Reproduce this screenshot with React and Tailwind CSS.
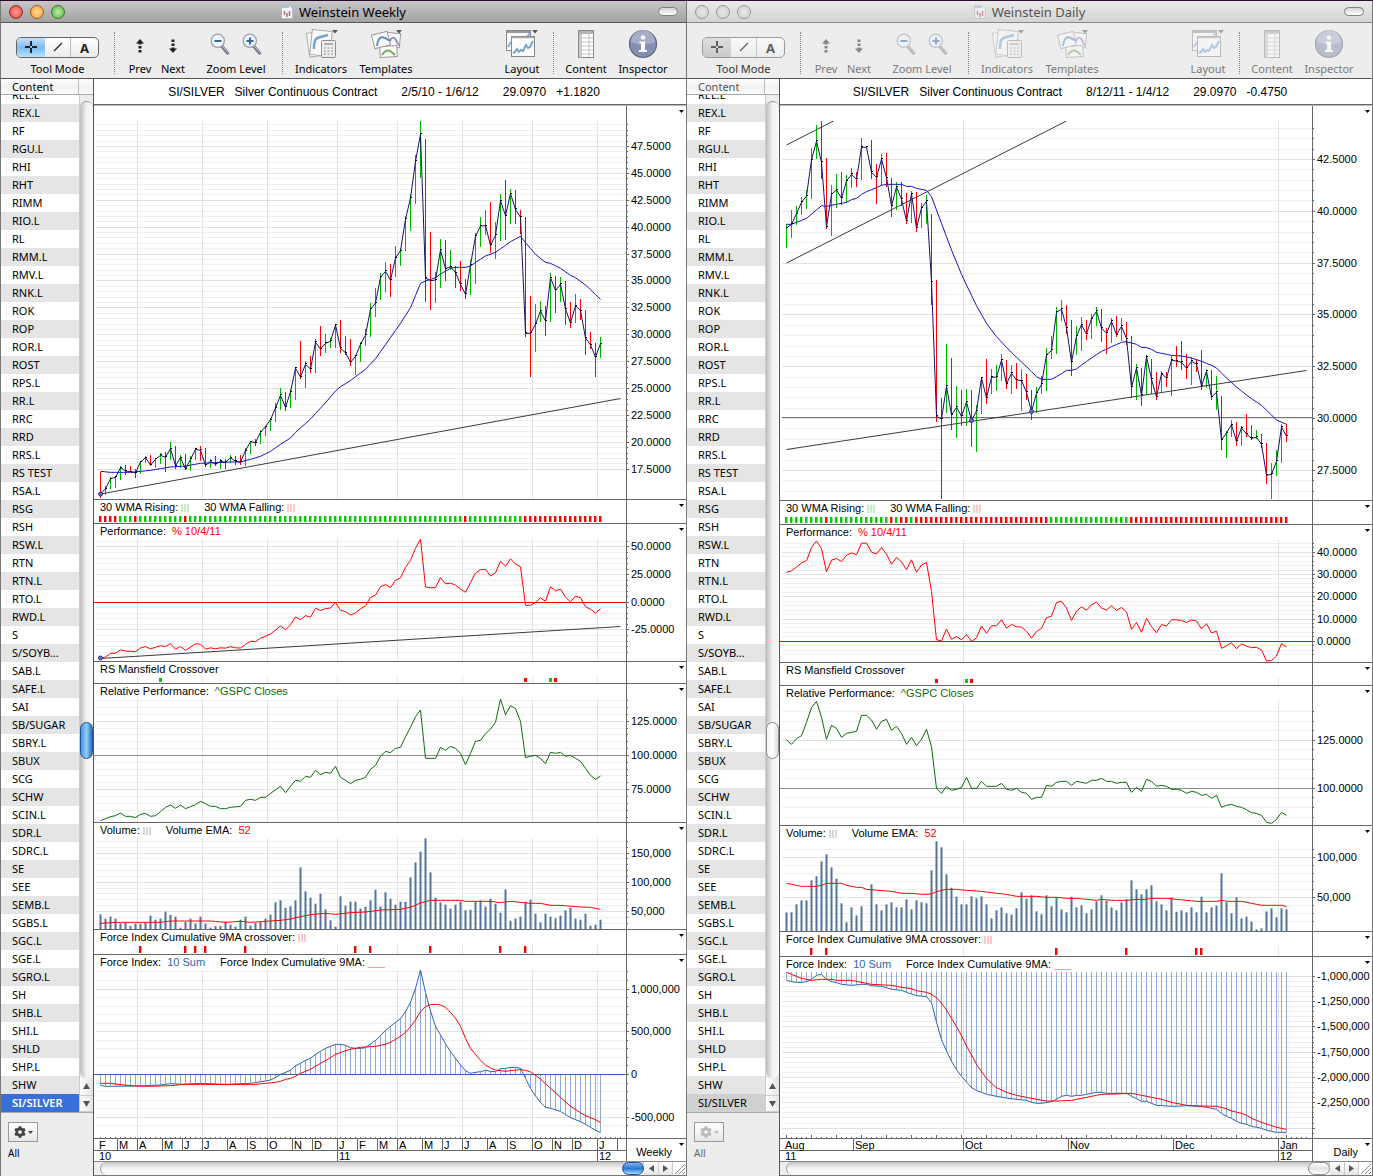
import React from 'react';
import { FaCog } from 'react-icons/fa';

const SYMBOLS = [
  'REX.L', 'RF', 'RGU.L', 'RHI', 'RHT', 'RIMM', 'RIO.L', 'RL', 'RMM.L', 'RMV.L', 'RNK.L', 'ROK', 'ROP', 'ROR.L',
  'ROST', 'RPS.L', 'RR.L', 'RRC', 'RRD', 'RRS.L', 'RS TEST', 'RSA.L', 'RSG', 'RSH', 'RSW.L', 'RTN', 'RTN.L',
  'RTO.L', 'RWD.L', 'S', 'S/SOYB...', 'SAB.L', 'SAFE.L', 'SAI', 'SB/SUGAR', 'SBRY.L', 'SBUX', 'SCG', 'SCHW',
  'SCIN.L', 'SDR.L', 'SDRC.L', 'SE', 'SEE', 'SEMB.L', 'SGBS.L', 'SGC.L', 'SGE.L', 'SGRO.L', 'SH', 'SHB.L',
  'SHI.L', 'SHLD', 'SHP.L', 'SHW', 'SI/SILVER',
];

const UP = '#00b400';
const DOWN = '#ff0000';
const BLUE = '#2f64b0';
const GREEN = '#0d6b0d';

// bar number -> x in the plot
const X = (i) => 6.5 + 5 * i;

// "g373,444,384" is a rising bar: high, low, close
const parseBars = (text) =>
  text.trim().split(/\s+/).map((t) => {
    const [high, low, close] = t.slice(1).split(',').map(Number);
    return { up: t[0] === 'g', high, low, close };
  });

// [bar, value, bar, value, ...] -> one value for every bar
const expand = (pairs) => {
  const out = [];
  for (let k = 0; k + 3 < pairs.length; k += 2) {
    const [a, va, b, vb] = pairs.slice(k, k + 4);
    for (let i = a; i < b; i++) out[i] = va + ((vb - va) * (i - a)) / (b - a);
  }
  out[pairs[pairs.length - 2]] = pairs[pairs.length - 1];
  return out;
};

const flags = (runs) => runs.flatMap(([up, n]) => Array(n).fill(up));

// Plot values are stored in thirds of a pixel, measured downwards.
const weeklyBars = parseBars(`
r1115,1193,1182 g1158,1185,1166 g1132,1166,1136 g1130,1163,1132 g1098,1139,1103 r1095,1124,1113 r1099,1116,1115
r1108,1133,1119 g1084,1121,1086 g1068,1090,1073 r1065,1098,1095 g1075,1103,1078 g1060,1091,1066 r1057,1115,1072
g1026,1079,1046 r1038,1106,1097 g1066,1103,1073 r1062,1109,1107 g1069,1113,1078 g1045,1079,1048 r1038,1083,1051
r1044,1101,1096 g1078,1103,1084 r1068,1098,1093 g1077,1106,1084 r1078,1108,1087 g1066,1088,1073 r1068,1095,1084
r1065,1095,1086 g1045,1098,1052 g1023,1062,1025 r1018,1037,1028 g990,1032,997 g977,1008,980 g955,993,959
g910,966,924 g865,930,886 r876,933,922 g868,924,876 g801,900,805 r723,838,831 g784,864,793 r768,819,807
g717,819,727 r678,768,747 g702,759,730 g714,744,724 g673,744,675 r660,758,745 r708,766,758 r717,798,787
g765,825,769 g727,786,733 g688,738,705 g609,711,628 g564,651,609 g519,600,532 g486,576,514 r492,591,540
g438,531,474 g444,498,452 g348,453,358 g283,393,294 g165,312,184 g63,234,103 r117,606,534 r396,630,542
g515,609,540 g417,564,450 r420,543,506 g450,510,500 r498,564,518 r483,573,553 r537,597,583 g480,585,495
g399,552,409 g351,441,378 g330,405,377 r306,459,436 g366,477,406 g282,423,302 r240,420,347 g267,372,281
r270,372,328 r330,402,352 r351,711,700 r588,831,700 g612,756,673 g603,666,633 r618,708,663 g519,666,533
r528,639,571 g531,606,553 r543,675,627 r606,684,669 g582,669,617 r597,660,632 r630,765,714 r696,747,735
r729,831,771 g711,774,731`);

const dailyBars = parseBars(`
g373,444,384 g330,414,373 g318,375,341 g291,345,307 g270,327,288 g144,297,179 g75,177,124 r63,237,187
r174,387,381 g255,408,283 g222,324,270 r216,315,295 g225,309,243 g204,264,223 r216,261,238 g114,240,142
g141,143,142 r120,237,217 r192,312,232 g162,257,178 r159,261,233 r234,351,318 g246,330,261 r246,318,298
r279,372,363 g273,369,281 r276,396,385 g309,384,324 g285,372,304 r342,615,545 r540,966,949 r894,1197,957
g732,939,859 r774,990,945 g858,1014,922 r870,978,949 g867,978,906 r870,1041,962 g915,1056,933 g832,942,834
r777,912,894 g807,882,832 g795,873,831 g762,843,781 r780,867,852 g795,882,820 r789,867,840 g807,933,842
r822,900,877 r870,960,935 g861,939,880 g828,882,853 g744,873,765 g708,777,751 g621,762,637 g600,663,628
r615,702,683 r660,828,787 g678,765,709 g651,753,674 r660,720,702 g642,717,656 g621,678,634 r627,726,684
r684,762,700 g654,729,664 r648,711,704 g654,723,679 r666,735,716 r708,894,862 g792,900,804 r804,918,886
g765,885,770 r777,882,838 r816,900,891 g813,879,821 r816,861,834 g768,888,781 r738,801,783 r723,810,787
r762,837,805 g771,855,784 r777,816,792 r750,870,858 g807,864,814 r810,900,891 g828,930,877 r888,1050,1020
g993,1074,999 g960,1011,974 r966,1038,1024 g978,1038,984 r942,1011,1002 r975,1020,1015 g990,1017,1012
r1002,1044,1033 r1029,1152,1126 g1089,1197,1123 g1050,1128,1084 g972,1089,981 r972,1026,1009`);

const weeklyWma = expand([
  0, 1114, 2, 1117, 6, 1117, 10, 1111, 14, 1101, 17, 1098, 20, 1090, 26, 1086, 28, 1086, 30, 1078, 32, 1069,
  34, 1054, 36, 1033, 38, 1014, 39, 997, 42, 957, 45, 908, 47, 873, 48, 860, 50, 842, 51, 830, 53, 808, 55, 776,
  57, 734, 60, 670, 62, 623, 64, 550, 65, 543, 67, 533, 68, 522, 70, 505, 71, 502, 73, 502, 74, 498, 75, 487,
  77, 468, 79, 457, 81, 436, 82, 425, 84, 409, 85, 428, 87, 463, 89, 487, 90, 490, 92, 505, 94, 526, 95, 533,
  97, 555, 100, 598,
]);

const dailyWma = expand([
  0, 373, 1, 373, 4, 355, 7, 317, 8, 319, 11, 310, 12, 307, 13, 299, 14, 295, 15, 283, 16, 275, 18, 263, 19, 256,
  20, 253, 23, 253, 24, 259, 25, 259, 26, 265, 28, 271, 29, 290, 31, 370, 33, 450, 35, 523, 36, 555, 38, 617,
  40, 670, 42, 710, 44, 742, 46, 772, 48, 800, 50, 830, 51, 838, 53, 838, 55, 821, 56, 811, 57, 811, 58, 807,
  59, 795, 61, 774, 63, 754, 64, 748, 65, 740, 67, 727, 68, 725, 70, 733, 71, 742, 72, 743, 73, 748, 74, 757,
  77, 766, 79, 768, 81, 774, 83, 784, 85, 796, 86, 804, 88, 834, 90, 861, 92, 885, 93, 896, 95, 916, 97, 945,
  98, 960, 100, 973,
]);

const weeklyRelative = expand([
  0, 992, 2, 980, 3, 977, 4, 969, 5, 979, 6, 979, 7, 983, 8, 973, 9, 970, 10, 979, 11, 977, 12, 965, 13, 952,
  14, 945, 15, 955, 16, 945, 17, 956, 19, 944, 20, 934, 21, 941, 22, 949, 23, 949, 24, 956, 25, 956, 26, 952,
  28, 949, 29, 931, 30, 928, 31, 931, 32, 922, 33, 922, 34, 910, 36, 889, 37, 908, 38, 889, 39, 871, 40, 874,
  41, 859, 42, 862, 43, 841, 44, 854, 45, 847, 46, 850, 47, 829, 48, 862, 49, 871, 50, 881, 51, 871, 52, 868,
  53, 862, 54, 838, 55, 826, 56, 799, 57, 784, 58, 788, 59, 775, 60, 772, 61, 740, 62, 712, 63, 680, 64, 660,
  65, 805, 66, 805, 67, 805, 68, 772, 69, 781, 70, 769, 71, 775, 72, 790, 73, 824, 74, 790, 75, 754, 76, 751,
  77, 731, 78, 717, 79, 697, 80, 627, 81, 674, 82, 647, 83, 656, 84, 694, 85, 803, 86, 799, 87, 796, 88, 805,
  89, 821, 90, 787, 91, 790, 92, 787, 93, 799, 94, 796, 95, 805, 96, 814, 97, 835, 98, 856, 99, 868, 100, 858,
]);

const dailyRelative = expand([
  0, 750, 1, 763, 2, 746, 3, 737, 4, 697, 5, 653, 6, 634, 7, 682, 8, 748, 9, 706, 10, 715, 11, 742, 12, 730,
  13, 727, 14, 724, 15, 676, 16, 676, 17, 690, 18, 718, 19, 694, 20, 688, 21, 721, 22, 709, 23, 730, 24, 763,
  25, 742, 26, 767, 27, 748, 28, 718, 29, 770, 30, 895, 31, 910, 32, 889, 33, 901, 34, 898, 35, 892, 36, 862,
  37, 895, 38, 895, 39, 874, 40, 889, 42, 889, 43, 880, 44, 898, 45, 901, 46, 895, 47, 907, 48, 910, 49, 928,
  50, 922, 51, 922, 52, 886, 53, 889, 54, 877, 55, 874, 56, 874, 57, 886, 58, 874, 60, 880, 61, 871, 62, 871,
  63, 865, 64, 874, 65, 874, 66, 880, 67, 877, 68, 877, 69, 907, 70, 892, 71, 904, 72, 868, 73, 874, 74, 889,
  75, 886, 76, 889, 77, 898, 78, 898, 79, 901, 80, 910, 81, 904, 82, 907, 83, 916, 84, 913, 85, 925, 86, 916,
  87, 952, 88, 946, 89, 943, 90, 949, 91, 952, 92, 959, 93, 968, 94, 970, 95, 976, 96, 997, 97, 1000, 98, 988,
  99, 967, 100, 976,
]);

const weeklyVolume = [
  283, 296, 290, 296, 310, 306, 318, 311, 311, 306, 287, 299, 296, 275, 285, 290, 323, 306, 296, 311, 290, 311,
  323, 318, 318, 305, 314, 320, 299, 290, 317, 309, 306, 296, 284, 247, 241, 263, 259, 241, 142, 214, 233, 251,
  221, 268, 301, 320, 229, 257, 245, 245, 266, 260, 241, 209, 260, 217, 236, 254, 245, 245, 172, 127, 95, 55,
  157, 233, 247, 254, 266, 254, 245, 271, 269, 245, 241, 260, 236, 251, 278, 208, 302, 296, 290, 245, 239, 281,
  307, 281, 290, 295, 287, 271, 263, 296, 299, 281, 317, 314, 299,
];

const dailyVolume = [
  277, 277, 253, 241, 241, 181, 169, 124, 103, 142, 176, 250, 307, 262, 286, 259, 333, 193, 253, 271, 253, 247,
  262, 262, 238, 268, 241, 247, 250, 151, 64, 82, 163, 203, 230, 253, 253, 229, 235, 229, 253, 295, 271, 262,
  280, 284, 265, 217, 236, 226, 274, 283, 226, 259, 233, 268, 277, 230, 262, 256, 280, 268, 244, 226, 242, 262,
  271, 247, 238, 181, 208, 223, 208, 196, 244, 253, 271, 232, 275, 271, 277, 262, 277, 230, 277, 262, 257, 160,
  247, 280, 232, 295, 290, 305, 328, 325, 274, 265, 292, 265, 268,
];

const weeklyEma = expand([
  0, 310, 3, 307, 12, 307, 14, 303, 22, 303, 25, 307, 28, 304, 30, 307, 33, 304, 36, 301, 38, 297, 40, 290,
  42, 284, 45, 280, 47, 283, 50, 278, 53, 276, 56, 270, 60, 268, 62, 262, 64, 249, 66, 241, 72, 241, 73, 244,
  78, 244, 80, 248, 82, 244, 86, 250, 88, 250, 90, 256, 92, 256, 96, 261, 98, 262, 100, 268,
]);

const dailyEma = expand([
  0, 190, 3, 199, 6, 199, 7, 196, 8, 190, 11, 190, 12, 196, 14, 202, 15, 202, 16, 208, 19, 212, 21, 214, 23, 220,
  25, 220, 27, 223, 29, 222, 30, 215, 32, 208, 34, 208, 36, 211, 39, 214, 42, 220, 44, 223, 46, 229, 50, 229,
  52, 232, 54, 232, 56, 235, 58, 235, 60, 238, 62, 241, 63, 238, 65, 241, 68, 241, 70, 238, 72, 238, 73, 235,
  76, 235, 78, 238, 80, 241, 82, 244, 86, 244, 87, 241, 88, 244, 91, 244, 93, 250, 95, 256, 99, 256, 100, 260,
]);

const weeklyForce = expand([
  0, 796, 1, 799, 8, 798, 10, 796, 12, 795, 14, 791, 16, 793, 20, 790, 25, 793, 30, 790, 33, 783, 34, 780,
  35, 773, 36, 763, 38, 751, 39, 737, 40, 730, 41, 721, 42, 715, 43, 703, 44, 694, 45, 685, 46, 679, 47, 673,
  48, 673, 49, 676, 50, 683, 51, 685, 52, 685, 53, 683, 54, 672, 55, 661, 56, 647, 57, 631, 58, 619, 59, 607,
  60, 596, 61, 575, 62, 547, 63, 505, 64, 450, 65, 518, 66, 573, 67, 619, 68, 645, 69, 671, 70, 695, 71, 715,
  72, 735, 73, 752, 74, 760, 75, 757, 76, 755, 77, 751, 78, 754, 79, 755, 80, 746, 81, 745, 82, 742, 83, 742,
  84, 745, 85, 775, 86, 805, 87, 828, 88, 847, 89, 862, 90, 865, 91, 870, 92, 874, 93, 884, 94, 893, 95, 899,
  96, 905, 97, 913, 98, 922, 99, 931, 100, 937,
]);

const dailyForce = expand([
  0, 481, 1, 485, 2, 487, 3, 487, 4, 485, 5, 478, 6, 466, 7, 463, 8, 478, 9, 485, 10, 488, 11, 493, 13, 496,
  15, 493, 16, 493, 17, 497, 19, 499, 20, 503, 21, 508, 23, 511, 24, 517, 26, 527, 28, 530, 29, 548, 30, 606,
  31, 659, 32, 693, 33, 724, 34, 749, 35, 769, 36, 786, 37, 803, 38, 811, 40, 823, 42, 829, 44, 834, 46, 838,
  48, 841, 49, 847, 50, 850, 51, 850, 53, 845, 54, 838, 55, 829, 56, 826, 57, 829, 58, 826, 59, 826, 60, 823,
  62, 817, 63, 817, 64, 820, 68, 820, 69, 829, 70, 836, 71, 844, 72, 844, 74, 856, 77, 859, 78, 859, 80, 857,
  83, 860, 84, 862, 86, 868, 87, 880, 88, 889, 89, 895, 90, 904, 91, 910, 92, 913, 93, 919, 95, 925, 96, 931,
  97, 934, 98, 937, 100, 937,
]);

const weeklyForceMa = expand([
  0, 790, 2, 790, 4, 794, 7, 798, 10, 799, 14, 797, 16, 794, 20, 793, 25, 794, 31, 793, 33, 790, 35, 787, 36, 784,
  37, 778, 38, 775, 39, 769, 40, 760, 42, 748, 44, 730, 46, 713, 47, 703, 49, 692, 50, 688, 52, 682, 55, 679,
  57, 673, 58, 667, 60, 649, 61, 637, 62, 620, 63, 600, 64, 575, 65, 560, 66, 554, 67, 553, 68, 555, 69, 562,
  70, 577, 71, 595, 72, 619, 73, 655, 74, 685, 75, 703, 76, 721, 77, 735, 78, 744, 79, 750, 80, 752, 81, 754,
  82, 752, 84, 749, 85, 751, 86, 756, 87, 766, 88, 777, 89, 791, 90, 805, 92, 832, 94, 859, 96, 878, 97, 887,
  99, 899, 100, 908,
]);

const dailyForceMa = expand([
  0, 457, 3, 475, 5, 481, 7, 478, 9, 478, 10, 481, 13, 481, 15, 487, 17, 493, 21, 496, 23, 502, 25, 506, 26, 512,
  28, 517, 29, 523, 30, 533, 31, 550, 32, 570, 33, 595, 34, 620, 35, 647, 36, 678, 37, 705, 38, 733, 39, 755,
  40, 775, 41, 790, 42, 803, 44, 817, 46, 826, 48, 832, 50, 838, 52, 843, 54, 843, 57, 841, 59, 835, 62, 826,
  63, 823, 66, 822, 69, 820, 70, 823, 73, 832, 75, 838, 77, 847, 80, 856, 83, 858, 86, 859, 88, 866, 89, 873,
  91, 880, 92, 886, 93, 895, 95, 907, 97, 917, 98, 922, 100, 928,
]);

const fixed4 = (v) => v.toFixed(4);
const grouped = (v) => v.toLocaleString('en-US');

const WEEKLY = {
  title: 'Weinstein Weekly',
  active: true,
  range: '2/5/10 - 1/6/12',
  change: '+1.1820',
  period: 'Weekly',
  grid: [43, 108, 173, 243, 303, 368, 438, 503],
  months: [
    ['F', 3], ['M', 23], ['A', 43], ['M', 68], ['J', 88], ['J', 108], ['A', 133], ['S', 153], ['O', 173], ['N', 198],
    ['D', 218], ['J', 243], ['F', 263], ['M', 283], ['A', 303], ['M', 328], ['J', 348], ['J', 368], ['A', 393],
    ['S', 413], ['O', 438], ['N', 458], ['D', 478], ['J', 503], ['', 523],
  ],
  years: [['10', 3], ['11', 243], ['12', 503]],
  price: {
    size: 'h-[394px]', plot: 378, bars: weeklyBars, wma: weeklyWma,
    axis: { value: 47.5, y: 25.5, step: 0.5, px: 5.379, every: 5, format: fixed4 },
    trends: [[6.5, 373, 526.5, 277.5]],
    dots: [[6.5, 373]],
  },
  wma: { size: 'h-6', plot: 8, flags: flags([[0, 4], [1, 3], [0, 1], [1, 9], [0, 1], [1, 55], [0, 1], [1, 11], [0, 16]]) },
  performance: {
    size: 'h-[138px]', plot: 122, zero: 63.5, ref: 673, scale: 0.1107,
    axis: { value: 0, y: 63.3, step: 5, px: 5.53, every: 5, format: fixed4 },
    trends: [[6.5, 119.5, 526.5, 87.5]],
    dots: [[6.5, 119]],
  },
  mansfield: { size: 'h-[22px]', plot: 6, marks: [[12, 1], [85, 0], [90, 1], [91, 0]] },
  relative: {
    size: 'h-[139px]', plot: 123, values: weeklyRelative, shift: -209, zero: 56.5,
    axis: { value: 100, y: 56.4, step: 5, px: 6.85, every: 5, format: fixed4 },
  },
  volume: {
    size: 'h-[107px]', plot: 91, values: weeklyVolume, ema: weeklyEma, shift: -18,
    axis: { value: 100000, y: 44.2, step: 10000, px: 5.83, every: 5, format: grouped },
  },
  crossover: { size: 'h-[25px]', plot: 9, marks: [8, 17, 19, 21, 29, 51, 54, 66, 80, 85] },
  force: {
    size: 'h-[184px]', plot: 168, values: weeklyForce, ma: weeklyForceMa, shift: -150, base: 104.5, baseline: true,
    axis: { value: 0, y: 104.5, step: 100000, px: 8.55, every: 5, format: grouped },
  },
};

const DAILY = {
  title: 'Weinstein Daily',
  active: false,
  range: '8/12/11 - 1/4/12',
  change: '-0.4750',
  period: 'Daily',
  grid: [183, 498],
  months: [['Aug', 3], ['Sep', 73], ['Oct', 183], ['Nov', 288], ['Dec', 393], ['Jan', 498]],
  years: [['11', 3], ['12', 498]],
  price: {
    size: 'h-[395px]', plot: 379, bars: dailyBars, wma: dailyWma, level: 296.5,
    axis: { value: 42.5, y: 38.5, step: 0.5, px: 10.365, every: 5, format: fixed4 },
    trends: [[6.5, 24, 53.5, 0], [6.5, 142, 286.5, 0], [6.5, 328.5, 526.5, 249.5]],
    dots: [[191.5, 299.5], [251.5, 290.5]],
  },
  wma: {
    size: 'h-6', plot: 8,
    flags: flags([[1, 8], [0, 1], [1, 12], [0, 1], [1, 1], [0, 2], [1, 1], [0, 27], [1, 16], [0, 32]]),
  },
  performance: {
    size: 'h-[138px]', plot: 122, zero: 101.5, ref: 961.5, scale: 0.1197,
    axis: { value: 0, y: 101.3, step: 2, px: 4.45, every: 5, format: fixed4 },
    trends: [], dots: [],
  },
  mansfield: { size: 'h-[23px]', plot: 7, marks: [[30, 0], [36, 1], [37, 0]] },
  relative: {
    size: 'h-[140px]', plot: 124, values: dailyRelative, shift: -211, zero: 87.5,
    axis: { value: 100, y: 87.3, step: 5, px: 9.6, every: 5, format: fixed4 },
  },
  volume: {
    size: 'h-[106px]', plot: 90, values: dailyVolume, ema: dailyEma, shift: -21,
    axis: { value: 100000, y: 16.5, step: 10000, px: 8, every: 5, format: grouped },
  },
  crossover: { size: 'h-[25px]', plot: 9, marks: [5, 8, 54, 68, 82, 83] },
  force: {
    size: 'h-[182px]', plot: 166, values: dailyForce, ma: dailyForceMa, shift: -152, base: 0, weeks: true,
    axis: { value: -1000000, y: 4.3, step: 50000, px: 5.06, every: 5, format: grouped },
  },
};

const axisTicks = (axis, height) => {
  const ticks = [];
  if (!axis) return ticks;
  for (let n = -60; n <= 60; n++) {
    const y = axis.y + n * axis.px;
    if (y < 1 || y > height - 4) continue;
    const value = axis.value - n * axis.step;
    const major = Math.round(value / axis.step) % axis.every === 0;
    ticks.push({ y: Math.floor(y) + 0.5, value, major, label: major && y < height - 12 });
  }
  return ticks;
};

const Line = ({ values, y, stroke }) => (
  <polyline points={values.map((v, i) => `${X(i)},${y(v).toFixed(2)}`).join(' ')} fill="none" stroke={stroke} />
);

const Caret = ({ className }) => (
  <svg width="5" height="3" viewBox="0 0 5 3" className={className}>
    <path d="M0 0h5L2.5 3z" fill="currentColor" />
  </svg>
);

const Stripes = ({ color }) => (
  <svg width="8" height="8" className="ml-[3px] shrink-0">
    <path d="M1 0v8M4 0v8M7 0v8" stroke={color} strokeWidth="1.6" />
  </svg>
);

const Pane = ({ size, plot, grid, axis, legend, name, children }) => {
  const ticks = axisTicks(axis, plot);
  return (
    <section className={`flex ${size} border-b border-[#666]`}>
      <div className="flex min-w-0 flex-1 flex-col">
        <div className="flex h-[15px] shrink-0 items-center gap-[15px] pl-1.5 text-[11px] leading-[15px] whitespace-nowrap">
          {legend}
        </div>
        <svg className="min-h-0 w-full flex-1">
          <g shapeRendering="crispEdges">
            {ticks.map((t) => (
              <line key={t.y} x1="2" x2="100%" y1={t.y} y2={t.y} stroke={t.major ? '#e2e2e2' : '#f0f0f0'} />
            ))}
            {grid.map((x) => (
              <line key={x} x1={x + 0.5} x2={x + 0.5} y1="0" y2="100%" stroke="#e2e2e2" />
            ))}
          </g>
          {children}
        </svg>
      </div>
      <div className="relative w-[60px] shrink-0 border-l border-[#666]">
        <svg className="h-full w-full overflow-visible">
          {ticks.map((t) => (
            <line key={t.y} x1="0" x2={t.major ? 2 : 1} y1={t.y + 15} y2={t.y + 15} stroke="#666" />
          ))}
          {ticks.filter((t) => t.label).map((t) => (
            <text key={t.y} x="4" y={Math.round(t.y + 18)} fontSize="11">{axis.format(t.value)}</text>
          ))}
        </svg>
        <button type="button" aria-label={`${name} menu`} className="absolute top-1 right-0.5">
          <Caret className="block" />
        </button>
      </div>
    </section>
  );
};

const Overlay = ({ trends, dots }) => (
  <>
    {trends.map((t) => (
      <line key={t.join()} x1={t[0]} y1={t[1]} x2={t[2]} y2={t[3]} stroke="#3c3c3c" />
    ))}
    {dots.map((d) => (
      <circle key={d.join()} cx={d[0]} cy={d[1]} r="2" fill="#6f6fc8" stroke="#2d2d80" />
    ))}
  </>
);

const Legend = ({ label, value, color, children }) => (
  <span className="flex items-center">
    {label}
    {value && <span className="ml-1.5" style={{ color }}>{value}</span>}
    {children}
  </span>
);

const Charts = ({ data }) => {
  const { grid, price, wma, performance, mansfield, relative, volume, crossover, force } = data;
  const priceY = (v) => v / 3 - 21;
  const closes = price.bars.map((b) => b.close);
  const performanceY = (v) => performance.axis.y + (v - performance.ref) * performance.scale;
  const relativeY = (v) => v / 3 + relative.shift;
  const volumeY = (v) => v / 3 + volume.shift;
  const forceY = (v) => v / 3 + force.shift;

  return (
    <>
      <Pane name="Price" size={price.size} plot={price.plot} grid={grid} axis={price.axis}>
        {price.level && <line x1="2" x2="100%" y1={price.level} y2={price.level} stroke="#777" />}
        <g shapeRendering="crispEdges">
          {price.bars.map((b, i) => (
            <line key={i} x1={X(i)} x2={X(i)} y1={priceY(b.high)} y2={priceY(b.low)} stroke={b.up ? UP : DOWN} />
          ))}
        </g>
        <Line values={price.wma} y={priceY} stroke="#1414c8" />
        <Line values={closes} y={priceY} stroke="#14146e" />
        {closes.map((c, i) => (
          <rect key={i} x={X(i) - 0.5} y={Math.round(priceY(c)) - 1} width="2" height="1" fill="#000" />
        ))}
        <Overlay trends={price.trends} dots={price.dots} />
      </Pane>

      <Pane
        name="30 WMA" size={wma.size} plot={wma.plot} grid={grid}
        legend={
          <>
            <Legend label="30 WMA Rising:"><Stripes color="#b4eab4" /></Legend>
            <Legend label="30 WMA Falling:"><Stripes color="#ffbcbc" /></Legend>
          </>
        }
      >
        {wma.flags.map((up, i) => (
          <rect key={i} x={X(i) - 1.5} y="1" width="2.4" height="6" fill={up ? '#00cc00' : DOWN} />
        ))}
      </Pane>

      <Pane
        name="Performance" size={performance.size} plot={performance.plot} grid={grid} axis={performance.axis}
        legend={<Legend label="Performance:" value="% 10/4/11" color="#ff0000" />}
      >
        <line x1="0" x2="100%" y1={performance.zero} y2={performance.zero} stroke="#ff0000" />
        <Line values={closes} y={performanceY} stroke="#ff0000" />
        <Overlay trends={performance.trends} dots={performance.dots} />
      </Pane>

      <Pane
        name="RS Mansfield Crossover" size={mansfield.size} plot={mansfield.plot} grid={grid}
        legend={<Legend label="RS Mansfield Crossover" />}
      >
        {mansfield.marks.map(([i, up]) => (
          <rect key={i} x={X(i) - 1.5} y="1" width="3" height="4" fill={up ? '#00cc00' : DOWN} />
        ))}
      </Pane>

      <Pane
        name="Relative Performance" size={relative.size} plot={relative.plot} grid={grid} axis={relative.axis}
        legend={<Legend label="Relative Performance:" value="^GSPC Closes" color={GREEN} />}
      >
        <line x1="0" x2="100%" y1={relative.zero} y2={relative.zero} stroke="#8c8c8c" />
        <Line values={relative.values} y={relativeY} stroke={GREEN} />
      </Pane>

      <Pane
        name="Volume" size={volume.size} plot={volume.plot} grid={grid} axis={volume.axis}
        legend={
          <>
            <Legend label="Volume:"><Stripes color="#c8d0d8" /></Legend>
            <Legend label="Volume EMA:" value="52" color="#ff0000" />
          </>
        }
      >
        {volume.values.map((v, i) => (
          <rect key={i} x={X(i) - 1} y={volumeY(v)} width="2" height={volume.plot - volumeY(v)} fill="#54749a" />
        ))}
        <Line values={volume.ema} y={volumeY} stroke="#ff0000" />
      </Pane>

      <Pane
        name="Force Index crossover" size={crossover.size} plot={crossover.plot} grid={grid}
        legend={<Legend label="Force Index Cumulative 9MA crossover:"><Stripes color="#ffbcbc" /></Legend>}
      >
        {crossover.marks.map((i) => (
          <rect key={i} x={X(i) - 1.5} y="1" width="2.4" height="7" fill={DOWN} />
        ))}
      </Pane>

      <Pane
        name="Force Index" size={force.size} plot={force.plot} grid={grid} axis={force.axis}
        legend={
          <>
            <Legend label="Force Index:" value="10 Sum" color={BLUE} />
            <Legend label="Force Index Cumulative 9MA:">
              <span className="ml-[3px] h-2.5 w-[17px] border-b border-[#ff9c9c]" />
            </Legend>
          </>
        }
      >
        <g shapeRendering="crispEdges">
          {force.values.map((v, i) => (
            <line key={i} x1={X(i)} x2={X(i)} y1={force.base} y2={forceY(v)} stroke="#8fabdc" />
          ))}
        </g>
        {force.baseline && <line x1="0" x2="100%" y1={force.base} y2={force.base} stroke={BLUE} />}
        <Line values={force.values} y={forceY} stroke={BLUE} />
        <Line values={force.ma} y={forceY} stroke="#ff0000" />
        {Array.from({ length: 105 }, (_, i) => (
          <line
            key={i} x1={X(i)} x2={X(i)} stroke="#666"
            y1={force.plot - (force.weeks && i % 5 === 0 ? 3 : 1)} y2={force.plot}
          />
        ))}
      </Pane>
    </>
  );
};

const DateAxis = ({ data }) => (
  <div className="flex h-[23px] border-b border-[#888]">
    <svg className="h-full min-w-0 flex-1">
      <line x1="0" x2="100%" y1="11.5" y2="11.5" stroke="#666" />
      {data.months.map(([label, x], i) => (
        <g key={x}>
          {i > 0 && <line x1={x + 0.5} x2={x + 0.5} y1="0" y2="11" stroke="#666" />}
          <text x={x + 2} y="10" fontSize="11">{label}</text>
        </g>
      ))}
      {data.years.map(([label, x], i) => (
        <g key={x}>
          {i > 0 && <line x1={x + 0.5} x2={x + 0.5} y1="12" y2="23" stroke="#666" />}
          <text x={x + 2} y="21" fontSize="11">{label}</text>
        </g>
      ))}
    </svg>
    <div className="relative w-[60px] shrink-0 border-l border-[#666]">
      <select
        aria-label="Period"
        defaultValue={data.period}
        className="h-full w-full appearance-none bg-transparent pr-3.5 pb-1 text-right text-[11px] leading-[14px]"
      >
        <option>Daily</option>
        <option>Weekly</option>
      </select>
      <Caret className="pointer-events-none absolute top-1 right-0.5" />
    </div>
  </div>
);

const Arrow = ({ d, label, className }) => (
  <button type="button" aria-label={label} className={`flex items-center justify-center ${className}`}>
    <svg width="7" height="7" viewBox="0 0 7 7"><path d={d} fill="#555" /></svg>
  </button>
);

const BottomScroller = ({ active }) => (
  <div className="flex h-3.5 items-stretch border-b border-[#777] bg-[#ededed]">
    <div className="ml-1.5 flex min-w-0 flex-1 justify-end rounded-l-full border-l border-[#999] bg-linear-to-b from-[#c4c4c4] via-[#f4f4f4] to-[#fdfdfd]">
      <div
        className={`w-[22px] rounded-full border ${
          active
            ? 'border-[#23509c] bg-linear-to-b from-[#7fb4ee] via-[#2d74d0] to-[#9fe0ff]'
            : 'border-[#8a8a8a] bg-linear-to-b from-white via-[#e2e2e2] to-white'
        }`}
      />
    </div>
    <Arrow label="Scroll left" d="M6 0v7L1 3.5z" className="w-3.5 bg-linear-to-b from-white to-[#e4e4e4]" />
    <Arrow label="Scroll right" d="M1 0v7l5-3.5z" className="w-3.5 border-l border-[#ccc] bg-linear-to-b from-white to-[#e4e4e4]" />
    <svg width="14" height="13" className="shrink-0 border-l border-[#ccc] bg-white">
      <path d="M2 12L12 2M6 12l6-6M10 12l2-2" stroke="#8a8a8a" />
    </svg>
  </div>
);

const Sidebar = ({ active }) => (
  <aside className="flex w-[93px] shrink-0 flex-col border-r border-[#555] bg-[#ededed] text-[11px]">
    <div className="flex h-4 border-b border-[#aaa] bg-linear-to-b from-white via-[#f2f2f2] to-[#fafafa] leading-4">
      <span className={`w-[78px] border-r border-[#bbb] pl-[11px] ${active ? '' : 'text-[#555]'}`}>Content</span>
    </div>
    <div className="flex">
      <ul className="min-w-0 flex-1 bg-white">
        <li className="flex h-[9px] items-end overflow-hidden pl-[11px] leading-[18px]">REL.L</li>
        {SYMBOLS.map((name, i) => {
          const selected = name === 'SI/SILVER';
          const shade = i % 2 === 0 ? 'bg-[#e5e5e5]' : 'bg-white';
          const highlight = active ? 'bg-[#386fd8] font-semibold text-white' : 'bg-[#d0d0d0]';
          return (
            <li key={name} className={`h-[18px] pl-[11px] leading-[18px] whitespace-nowrap ${selected ? highlight : shade}`}>
              {name}
            </li>
          );
        })}
      </ul>
      <div className="flex w-3.5 shrink-0 flex-col border-l border-[#ccc]">
        <div className="mt-1.5 flex flex-1 flex-col rounded-full border-t border-[#999] bg-linear-to-r from-[#bdbdbd] via-[#f2f2f2] to-[#fafafa]">
          <div className="flex-[621]" />
          <div
            className={`h-[37px] rounded-full border ${
              active
                ? 'border-[#23509c] bg-linear-to-r from-[#4d8fdd] via-[#8fd0fa] to-[#2d6cc4]'
                : 'border-[#8a8a8a] bg-linear-to-r from-[#f4f4f4] via-white to-[#dedede]'
            }`}
          />
          <div className="flex-[319]" />
        </div>
        <Arrow label="Scroll up" d="M0 6h7L3.5 0z" className="h-[17px] bg-linear-to-r from-white to-[#e4e4e4]" />
        <Arrow label="Scroll down" d="M0 1h7L3.5 7z" className="h-[17px] border-y border-[#ccc] bg-linear-to-r from-white to-[#e4e4e4]" />
      </div>
    </div>
    <div className="flex-1 border-t border-[#aaa] pt-[9px] pl-[7px]">
      <button
        type="button"
        aria-label="List actions"
        className={`flex h-5 w-[30px] items-center justify-center gap-0.5 border border-[#999] bg-linear-to-b from-white to-[#e6e6e6] ${
          active ? 'text-[#444]' : 'text-[#bbb]'
        }`}
      >
        <FaCog size={12} />
        <Caret />
      </button>
      <div className={`mt-[3px] text-[10px] leading-4 ${active ? '' : 'text-[#666]'}`}>All</div>
    </div>
  </aside>
);

const StepIcon = ({ down }) => (
  <svg width="8" height="14" viewBox="0 0 8 14" className={down ? 'rotate-180' : ''}>
    <path d="M0 4.5L4 0l4 4.5z" fill="#222" />
    <path d="M2.5 4h3v1.5h-3zM2.5 7h3v2.5h-3zM2.5 11h3v2.5h-3z" fill="#222" />
  </svg>
);

const LensIcon = ({ plus }) => (
  <svg width="20" height="22" viewBox="0 0 20 22">
    <path d="M12 13.5l5.500 6.500" stroke="#6f7884" strokeWidth="3.200" strokeLinecap="round" />
    <path d="M12.500 13.500l5 6" stroke="#c4cad2" strokeWidth="1" strokeLinecap="round" />
    <circle cx="7.800" cy="7.800" r="6.600" fill="#f0f6fc" stroke="#9a9ea4" strokeWidth="1.300" />
    <path d={plus ? 'M4.500 8h7M8 4.500v7' : 'M4.500 8h7'} stroke="#3a66a8" strokeWidth="2" />
  </svg>
);

const IndicatorsIcon = () => (
  <svg width="32" height="30" viewBox="0 0 32 30" className="overflow-visible">
    <rect x="3" y="3" width="19" height="24" fill="#f6f6f6" stroke="#b0b0b0" transform="rotate(-8 12 15)" />
    <rect x="6" y="1.500" width="20" height="25" fill="#fafafa" stroke="#a6a6a6" transform="rotate(6 16 14)" />
    <path d="M9 20c0-5 0-8 2-10s6-2 12-4" fill="none" stroke="#7aa6d2" strokeWidth="2.600" />
    <rect x="16.500" y="11.500" width="14" height="17" rx="1" fill="#ededed" stroke="#8c8c8c" />
    <path d="M19 15h9" stroke="#b0b0b0" strokeWidth="2" />
    <path d="M19 19h9M19 22h9M19 25h9" stroke="#b0b0b0" strokeWidth="1.600" strokeDasharray="2 1.500" />
    <path d="M27 1h6l-3 3.500z" fill="#555" />
  </svg>
);

const TemplatesIcon = () => (
  <svg width="32" height="30" viewBox="0 0 32 30" className="overflow-visible">
    <rect x="16" y="4" width="14" height="14" fill="#fafafa" stroke="#999" transform="rotate(6 23 11)" />
    <path d="M19 14c2-6 5-7 7-3s2 5 4 6" fill="none" stroke="#9a86c4" strokeWidth="1.800" />
    <rect x="10" y="17" width="17" height="11" fill="#fafafa" stroke="#999" transform="rotate(-3 18 22)" />
    <path d="M12 26c4-6 7-6 13 0" fill="none" stroke="#78a860" strokeWidth="1.800" />
    <rect x="3" y="4" width="16" height="14" fill="#fcfcfc" stroke="#999" transform="rotate(-14 11 11)" />
    <path d="M7 17c1-8 4-10 8-8s3 3 6 2" fill="none" stroke="#5f8fc4" strokeWidth="2" />
    <path d="M26 1h6l-3 3.500z" fill="#555" />
  </svg>
);

const LayoutIcon = () => (
  <svg width="32" height="30" viewBox="0 0 32 30" className="overflow-visible">
    <rect x="0.500" y="1.500" width="24" height="20" fill="#fafafa" stroke="#888" />
    <path d="M0.500 3h24" stroke="#999" strokeWidth="2" />
    <path d="M2 18l3-5M21 8l3-4" stroke="#85aad4" strokeWidth="2" />
    <rect x="5.500" y="7.500" width="23" height="20" fill="#fcfcfc" stroke="#888" />
    <path d="M5.500 8.500h23" stroke="#aaa" strokeWidth="1.500" />
    <path d="M7 24l2-1 2-3 2 3 2-2 2 1 3-6 2 3 2-1 3-6" fill="none" stroke="#7ba3d2" strokeWidth="2" />
    <path d="M26 1h6l-3 3.500z" fill="#555" />
  </svg>
);

const ContentIcon = () => (
  <svg width="16" height="28" viewBox="0 0 16 28">
    <rect x="0.500" y="0.500" width="15" height="27" fill="#fff" stroke="#888" />
    <path d="M1 2.500h14" stroke="#b4b4b4" strokeWidth="3" />
    <path d="M1 4v23.500h3V4z" fill="#cacaca" />
    <path d="M4 8h11M4 12h11M4 16h11M4 20h11M4 24h11M11 4v23" stroke="#c4c4c4" />
  </svg>
);

const InspectorIcon = () => (
  <svg width="30" height="30" viewBox="0 0 30 30">
    <circle cx="15" cy="15" r="13.500" fill="#8590b0" stroke="#5d6780" strokeWidth="1.200" />
    <path d="M3 13a12 12 0 0 1 24 0c-6 3-18 3-24 0z" fill="#b2bad0" opacity="0.700" />
    <circle cx="15" cy="8.500" r="2.300" fill="#fff" />
    <path d="M11.500 12.500h5.500v8.500h2v2h-8v-2h2v-6.500h-1.500z" fill="#fff" />
  </svg>
);

const Tool = ({ label, active, className = '', children }) => (
  <button type="button" className={`flex shrink-0 flex-col items-center ${className}`}>
    <span className={`flex h-8 items-center justify-center gap-3 ${active ? '' : 'opacity-50'}`}>{children}</span>
    <span className={`text-[11px] leading-[17px] whitespace-nowrap ${active ? 'text-black' : 'text-[#7a7a7a]'}`}>{label}</span>
  </button>
);

const Separator = ({ className }) => (
  <div className={`my-1 w-0 shrink-0 border-l border-dotted border-[#888] ${className}`} />
);

const Toolbar = ({ active }) => (
  <div className="flex h-14 border-b border-[#555] bg-[#ededed] pt-[5px] pr-[17px] pl-[15px]">
    <div className="flex w-[83px] shrink-0 flex-col items-center">
      <div className="flex h-8 w-full items-center pt-1.5">
        <div className={`flex h-[21px] w-full overflow-hidden rounded-[5px] border bg-linear-to-b from-white to-[#ececec] ${active ? 'border-[#666]' : 'border-[#777] opacity-70'}`}>
          <button
            type="button"
            aria-label="Crosshair"
            className={`flex w-7 items-center justify-center ${
              active ? 'bg-linear-to-b from-[#c4e0fa] via-[#7fbaf0] to-[#b4e4ff]' : 'bg-linear-to-b from-[#d8d8d8] to-[#bcbcbc]'
            }`}
          >
            <svg width="12" height="12"><path d="M6 0v5M6 7v5M0 6h5M7 6h5" stroke="#222" strokeWidth="2" /></svg>
          </button>
          <button type="button" aria-label="Line" className="flex w-[26px] items-center justify-center border-r border-[#bbb]">
            <svg width="10" height="10"><path d="M1 9l8-8" stroke="#333" strokeWidth="1.500" /></svg>
          </button>
          <button type="button" aria-label="Text" className="flex-1 text-[13px] leading-5 font-bold text-[#222]">A</button>
        </div>
      </div>
      <span className={`text-[11px] leading-[17px] ${active ? '' : 'text-[#333]'}`}>Tool Mode</span>
    </div>
    <Separator className="ml-[15px]" />
    <Tool label="Prev" active={active} className="ml-[9px] w-8"><span className="pt-1"><StepIcon /></span></Tool>
    <Tool label="Next" active={active} className="w-[34px]"><span className="pt-1"><StepIcon down /></span></Tool>
    <Tool label="Zoom Level" active={active} className="ml-3.5 w-16"><LensIcon /><LensIcon plus /></Tool>
    <Separator className="ml-3.5" />
    <Tool label="Indicators" active={active} className="ml-2.5 w-[56px]"><IndicatorsIcon /></Tool>
    <Tool label="Templates" active={active} className="ml-2 w-[58px]"><TemplatesIcon /></Tool>
    <Tool label="Layout" active={active} className="ml-auto w-10"><LayoutIcon /></Tool>
    <Separator className="ml-[11px]" />
    <Tool label="Content" active={active} className="ml-[9px] w-[46px]"><ContentIcon /></Tool>
    <Tool label="Inspector" active={active} className="ml-2 w-[52px]"><InspectorIcon /></Tool>
  </div>
);

const Light = ({ className, label }) => (
  <button type="button" aria-label={label} className={`size-[14px] rounded-full border ${className}`} />
);

const TitleBar = ({ title, active }) => (
  <div
    className={`flex h-[22px] items-center border-b px-2 ${
      active
        ? 'border-[#555] bg-linear-to-b from-[#c8c8c8] to-[#a2a2a2]'
        : 'border-[#888] bg-linear-to-b from-[#eaeaea] to-[#d4d4d4]'
    }`}
  >
    <div className="flex flex-1 gap-[7px]">
      <Light label="Close" className={active ? 'border-[#8c2a26] bg-radial from-[#ff9a94] to-[#e0383a]' : 'border-[#999] bg-radial from-[#e6e6e6] to-[#cfcfcf]'} />
      <Light label="Minimize" className={active ? 'border-[#9a5c1c] bg-radial from-[#ffdc90] to-[#ee9a30]' : 'border-[#999] bg-radial from-[#e6e6e6] to-[#cfcfcf]'} />
      <Light label="Zoom" className={active ? 'border-[#3c7a2c] bg-radial from-[#b8f0a0] to-[#58b040]' : 'border-[#999] bg-radial from-[#e6e6e6] to-[#cfcfcf]'} />
    </div>
    <h1 className={`flex items-center gap-1.5 text-[13px] leading-5 ${active ? 'text-black' : 'text-[#555]'}`}>
      <svg width="12" height="14" viewBox="0 0 12 14" className={active ? '' : 'opacity-60'}>
        <path d="M0.500 0.500h8l3 3v10h-11z" fill="#f4f6fa" stroke="#b4bccb" />
        <path d="M1 1h7v2H1z" fill="#a8c0e0" />
        <path d="M3.500 6v4M8.500 6v5" stroke="#d86060" strokeWidth="1.500" />
        <path d="M6 8v4" stroke="#7080b8" strokeWidth="1.500" />
      </svg>
      {title}
    </h1>
    <div className="flex flex-1 justify-end">
      <button type="button" aria-label="Toggle toolbar" className="h-[9px] w-5 rounded-full border border-[#808080] bg-linear-to-b from-[#d4d4d4] to-white" />
    </div>
  </div>
);

const ChartWindow = ({ data, className }) => (
  <div className={`flex min-w-0 flex-col border-l border-[#777] ${className}`}>
    <TitleBar title={data.title} active={data.active} />
    <Toolbar active={data.active} />
    <div className="flex">
      <Sidebar active={data.active} />
      <main className="min-w-0 flex-1 bg-white font-['Liberation_Sans',Arial,sans-serif]">
        <div className="border-b border-[#bbb]">
          <div className="flex h-[26px] items-center justify-center border-b border-[#666] pr-3 text-[12px] leading-4 whitespace-nowrap">
            <span className="mr-2.5">SI/SILVER</span>
            <span className="mr-6">Silver Continuous Contract</span>
            <span className="mr-6">{data.range}</span>
            <span className="mr-2.5">29.0970</span>
            <span>{data.change}</span>
          </div>
        </div>
        <Charts data={data} />
        <DateAxis data={data} />
        <BottomScroller active={data.active} />
      </main>
    </div>
  </div>
);

export default function App() {
  return (
    <div className="grid grid-cols-[686fr_687fr] border-t border-[#2c0a30] bg-[#ededed] font-['Noto_Sans','Open_Sans',sans-serif] text-black">
      <ChartWindow data={WEEKLY} className="" />
      <ChartWindow data={DAILY} className="border-r" />
    </div>
  );
}
